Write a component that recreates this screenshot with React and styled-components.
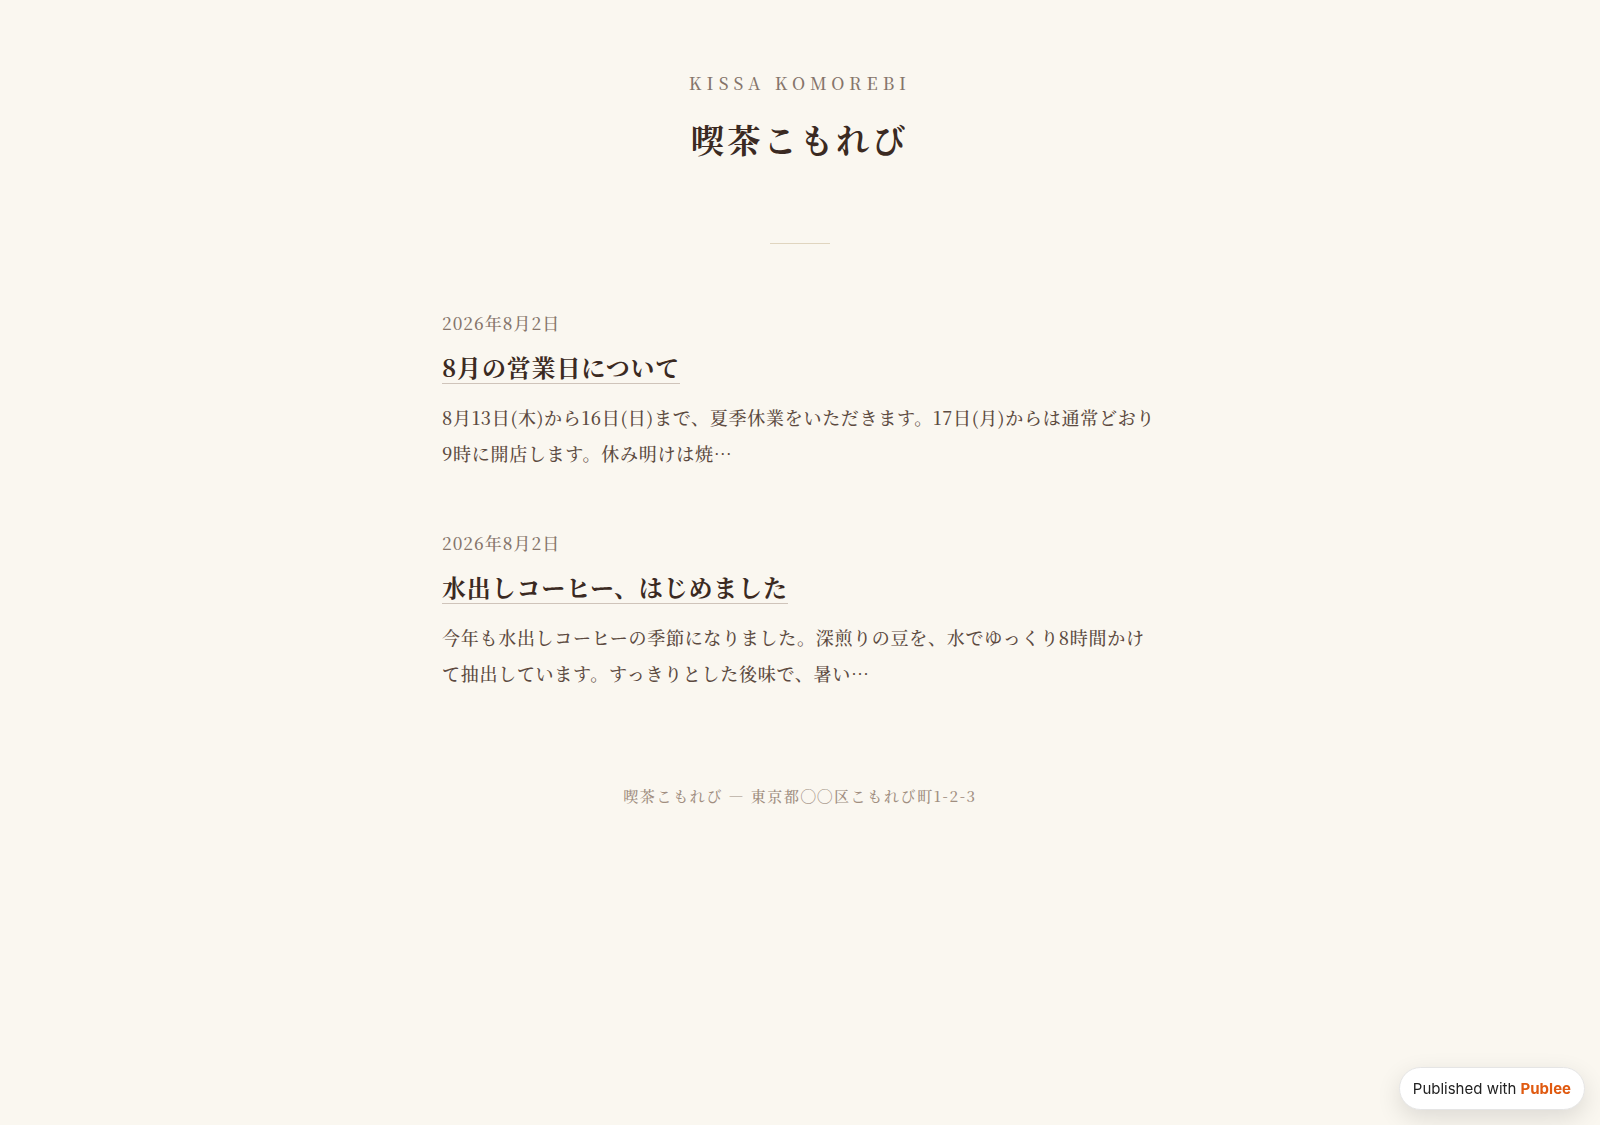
import React from "react";
import styled, { createGlobalStyle } from "styled-components";

const Global = createGlobalStyle`
  * { box-sizing: border-box; }
  body {
    margin: 0;
    background: #faf7f0;
    color: #3b2a22;
    font-family: "Noto Serif CJK JP", "Noto Serif JP", "Liberation Serif", "Noto Sans CJK JP", serif;
    font-size: 18px;
    font-weight: 500;
    line-height: 36px;
    letter-spacing: 0.04em;
  }
`;

const Page = styled.div`
  max-width: 716px;
  margin: 0 auto;
  padding: 63px 0;
`;

const Header = styled.header`
  display: flex;
  flex-direction: column;
  align-items: center;
  text-align: center;
`;

const Roman = styled.p`
  margin: 0 0 14px;
  font-size: 17px;
  letter-spacing: 0.3em;
  line-height: 40px;
  color: #85746a;
`;

const SiteTitle = styled.h1`
  margin: 0;
  font-size: 33px;
  line-height: 44px;
  letter-spacing: 0.1em;
`;

const Rule = styled.hr`
  width: 60px;
  height: 1px;
  margin: 82px 0 63px;
  border: 0;
  background: #e0d5bf;
`;

const Posts = styled.main`
  display: flex;
  flex-direction: column;
  gap: 56px;
`;

const PostDate = styled.time`
  display: block;
  font-size: 17px;
  line-height: 32px;
  letter-spacing: 0.06em;
  color: #85746a;
`;

const PostTitle = styled.h2`
  display: flex;
  margin: 12px 0 15px;
  font-size: 24px;
  line-height: 32px;
  letter-spacing: 0.035em;
`;

const PostLink = styled.a`
  color: inherit;
  text-decoration: none;
  border-bottom: 1px solid #cfc4ba;
`;

const Excerpt = styled.p`
  margin: 0;
  color: #5c4a40;
`;

const Footer = styled.footer`
  margin-top: 87px;
  text-align: center;
  font-size: 15px;
  letter-spacing: 0.11em;
  color: #a08e80;
`;

const Badge = styled.a`
  position: fixed;
  right: 15px;
  bottom: 15px;
  padding: 8px 13px;
  border: 1px solid #e5e5e5;
  border-radius: 24px;
  background: #fff;
  box-shadow: 0 8px 24px rgba(0, 0, 0, 0.12);
  font: 15px/25px Inter, sans-serif;
  letter-spacing: normal;
  color: #222;
  text-decoration: none;
`;

const Brand = styled.strong`
  color: #e05a10;
`;

const posts = [
  {
    title: "8月の営業日について",
    text: "8月13日(木)から16日(日)まで、夏季休業をいただきます。17日(月)からは通常どおり9時に開店します。休み明けは焼…",
  },
  {
    title: "水出しコーヒー、はじめました",
    text: "今年も水出しコーヒーの季節になりました。深煎りの豆を、水でゆっくり8時間かけて抽出しています。すっきりとした後味で、暑い…",
  },
];

export default function App() {
  return (
    <>
      <Global />
      <Page lang="ja">
        <Header>
          <Roman>KISSA KOMOREBI</Roman>
          <SiteTitle>喫茶こもれび</SiteTitle>
          <Rule />
        </Header>
        <Posts>
          {posts.map((post) => (
            <article key={post.title}>
              <PostDate dateTime="2026-08-02">2026年8月2日</PostDate>
              <PostTitle>
                <PostLink href="#">{post.title}</PostLink>
              </PostTitle>
              <Excerpt>{post.text}</Excerpt>
            </article>
          ))}
        </Posts>
        <Footer>喫茶こもれび — 東京都◯◯区こもれび町1-2-3</Footer>
      </Page>
      <Badge href="#">
        Published with <Brand>Publee</Brand>
      </Badge>
    </>
  );
}
